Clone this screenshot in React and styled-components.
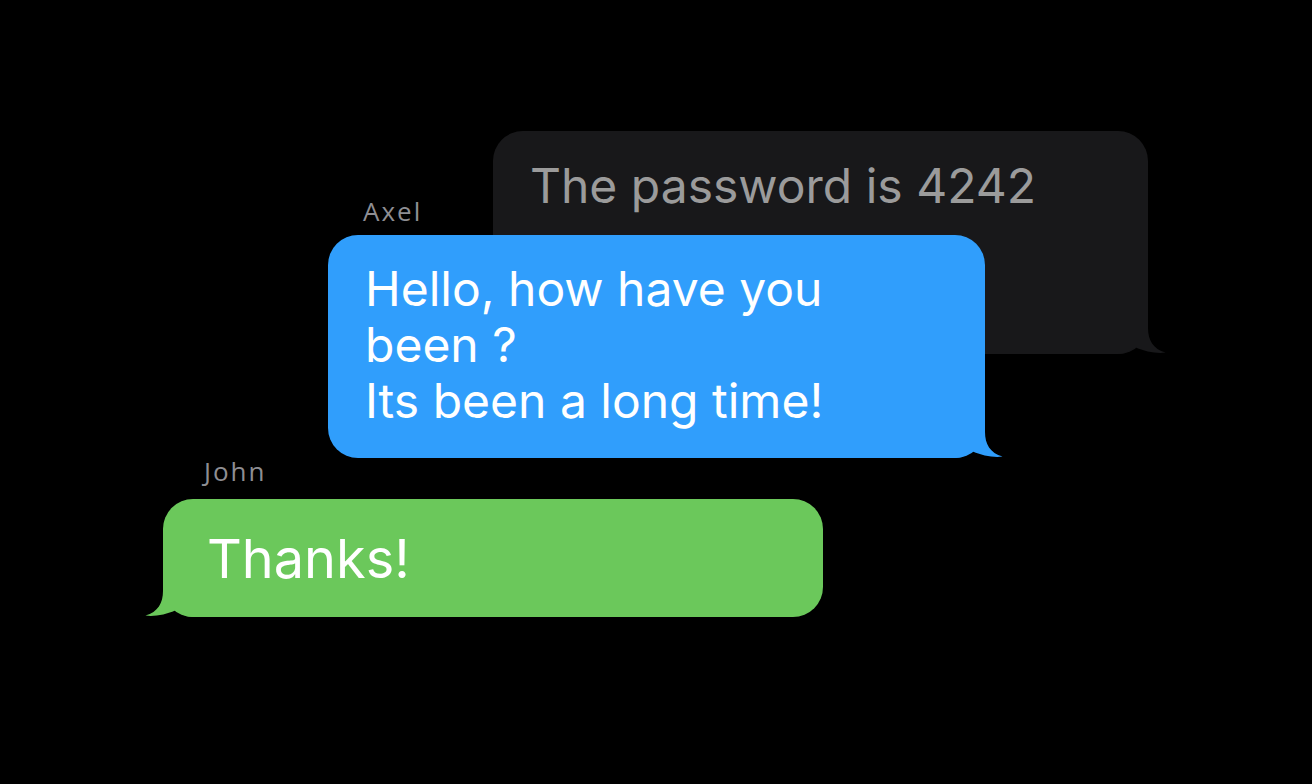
import React from 'react';
import styled, { createGlobalStyle } from 'styled-components';

const GlobalStyle = createGlobalStyle`
    html, body {
        margin: 0;
        padding: 0;
        background: #000;
    }
    #root {
        min-height: 100vh;
    }
`;

const palette = {
    gray: { bg: '#18181a', fg: '#9b9b9b' },
    blue: { bg: '#309efc', fg: '#ffffff' },
    green: { bg: '#6bc85b', fg: '#ffffff' },
};

const Thread = styled.main`
    width: 1312px;
    height: 784px;
    box-sizing: border-box;
    padding-top: 131px;
    display: flex;
    flex-direction: column;
    align-items: flex-start;
    overflow: hidden;
`;

const Message = styled.section`
    display: flex;
    flex-direction: column;
    align-items: flex-start;
    margin-left: ${p => p.$indent}px;
    margin-top: ${p => p.$lift}px;
    position: relative;
`;

const Sender = styled.span`
    font-family: "Open Sans", "Noto Sans", sans-serif;
    font-size: 26px;
    line-height: 30px;
    letter-spacing: 2px;
    color: #8e8e93;
    margin-left: ${p => p.$indent}px;
    margin-bottom: ${p => p.$gap}px;
`;

const Bubble = styled.div`
    position: relative;
    box-sizing: border-box;
    width: ${p => p.$width}px;
    min-height: ${p => p.$height}px;
    padding: ${p => p.$pad};
    border-radius: 30px;
    background: ${p => palette[p.$tone].bg};
    color: ${p => palette[p.$tone].fg};
    font-family: Inter, "Liberation Sans", sans-serif;
    font-size: ${p => p.$size}px;
    line-height: ${p => p.$lh}px;
    font-weight: 400;
`;

const TailSvg = styled.svg`
    position: absolute;
    bottom: 0;
    width: 48px;
    height: 36px;
    ${p => p.$side === 'left'
        ? 'left: -18px; transform: scaleX(-1);'
        : 'right: -18px;'}
    fill: ${p => palette[p.$tone].bg};
`;

// iMessage style tail hanging off the bottom corner
const Tail = ({ tone, side = 'right' }) => (
    <TailSvg $tone={tone} $side={side} viewBox="0 0 48 36">
        <path d="M30 0 L30 10 C30 22 35 31 47.5 34.5 C40 35.8 27 34 17 29 C12 33 6 36 0 36 L0 0 Z" />
    </TailSvg>
);

export default function App() {
    return (
        <>
            <GlobalStyle />
            <Thread>
                <Message $indent={493} $lift={0}>
                    <Bubble $tone="gray" $width={655} $height={223} $pad="27px 37px" $size={48} $lh={56}>
                        The password is 4242
                        <Tail tone="gray" />
                    </Bubble>
                </Message>

                <Message $indent={328} $lift={-158}>
                    <Sender $indent={35} $gap={9}>Axel</Sender>
                    <Bubble $tone="blue" $width={657} $height={223} $pad="26px 37px 29px" $size={48} $lh={56}>
                        Hello, how have you<br />
                        been ?<br />
                        Its been a long time!
                        <Tail tone="blue" />
                    </Bubble>
                </Message>

                <Message $indent={163} $lift={-2}>
                    <Sender $indent={41} $gap={13}>John</Sender>
                    <Bubble $tone="green" $width={660} $height={118} $pad="28px 44px 26px" $size={54} $lh={64}>
                        Thanks!
                        <Tail tone="green" side="left" />
                    </Bubble>
                </Message>
            </Thread>
        </>
    );
}
